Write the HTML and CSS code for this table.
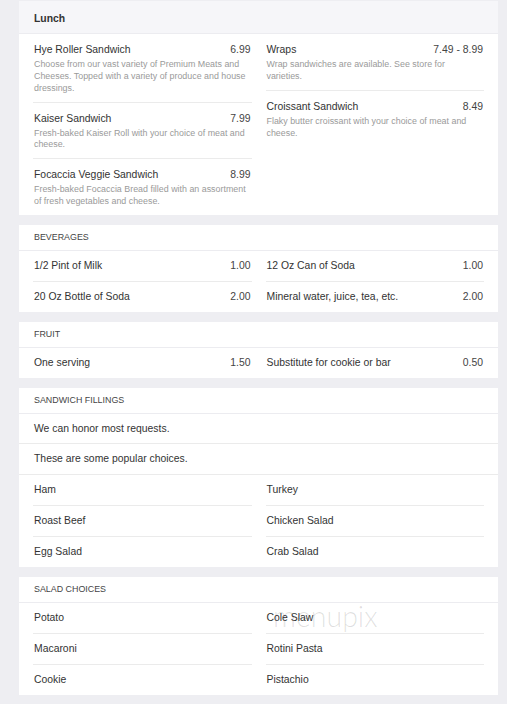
FILE: index.html
```html
<!DOCTYPE html>
<html lang="en">
<head>
<meta charset="utf-8">
<title>Menu</title>
<link rel="stylesheet" href="styles.css">
</head>
<body>
<div class="page">
  <section class="card">
    <h2 class="card-title">Lunch</h2>
    <div class="cols">
      <div class="col">
        <div class="item">
          <div class="item-head"><span class="name">Hye Roller Sandwich</span><span class="price">6.99</span></div>
          <p class="desc">Choose from our vast variety of Premium Meats and Cheeses. Topped with a variety of produce and house dressings.</p>
        </div>
        <div class="item">
          <div class="item-head"><span class="name">Kaiser Sandwich</span><span class="price">7.99</span></div>
          <p class="desc">Fresh-baked Kaiser Roll with your choice of meat and cheese.</p>
        </div>
        <div class="item">
          <div class="item-head"><span class="name">Focaccia Veggie Sandwich</span><span class="price">8.99</span></div>
          <p class="desc">Fresh-baked Focaccia Bread filled with an assortment of fresh vegetables and cheese.</p>
        </div>
      </div>
      <div class="col">
        <div class="item">
          <div class="item-head"><span class="name">Wraps</span><span class="price">7.49 - 8.99</span></div>
          <p class="desc">Wrap sandwiches are available. See store for varieties.</p>
        </div>
        <div class="item">
          <div class="item-head"><span class="name">Croissant Sandwich</span><span class="price">8.49</span></div>
          <p class="desc">Flaky butter croissant with your choice of meat and cheese.</p>
        </div>
      </div>
    </div>
  </section>

  <section class="card">
    <h3 class="section-title">Beverages</h3>
    <div class="cols">
      <div class="col">
        <div class="row"><span class="name">1/2 Pint of Milk</span><span class="price">1.00</span></div>
        <div class="row"><span class="name">20 Oz Bottle of Soda</span><span class="price">2.00</span></div>
      </div>
      <div class="col">
        <div class="row"><span class="name">12 Oz Can of Soda</span><span class="price">1.00</span></div>
        <div class="row"><span class="name">Mineral water, juice, tea, etc.</span><span class="price">2.00</span></div>
      </div>
    </div>
  </section>

  <section class="card">
    <h3 class="section-title">Fruit</h3>
    <div class="cols">
      <div class="col">
        <div class="row"><span class="name">One serving</span><span class="price">1.50</span></div>
      </div>
      <div class="col">
        <div class="row"><span class="name">Substitute for cookie or bar</span><span class="price">0.50</span></div>
      </div>
    </div>
  </section>

  <section class="card">
    <h3 class="section-title">Sandwich Fillings</h3>
    <div class="note note-first">We can honor most requests.</div>
    <div class="note">These are some popular choices.</div>
    <div class="cols">
      <div class="col">
        <div class="row"><span class="name">Ham</span></div>
        <div class="row"><span class="name">Roast Beef</span></div>
        <div class="row"><span class="name">Egg Salad</span></div>
      </div>
      <div class="col">
        <div class="row"><span class="name">Turkey</span></div>
        <div class="row"><span class="name">Chicken Salad</span></div>
        <div class="row"><span class="name">Crab Salad</span></div>
      </div>
    </div>
  </section>

  <section class="card">
    <h3 class="section-title">Salad Choices</h3>
    <div class="cols">
      <div class="col">
        <div class="row"><span class="name">Potato</span></div>
        <div class="row"><span class="name">Macaroni</span></div>
        <div class="row"><span class="name">Cookie</span></div>
      </div>
      <div class="col">
        <div class="row"><span class="name">Cole Slaw</span></div>
        <div class="row"><span class="name">Rotini Pasta</span></div>
        <div class="row"><span class="name">Pistachio</span></div>
      </div>
    </div>
  </section>

  <div class="watermark">menupix</div>
</div>
</body>
</html>
```

FILE: styles.css
```css
* {
  box-sizing: border-box;
}

html, body {
  margin: 0;
  padding: 0;
  background: #eeeef2;
}

body {
  font-family: "Liberation Sans", Arial, sans-serif;
  color: #333;
}

.page {
  position: relative;
  padding: 1px 9px 10px 19px;
  display: flex;
  flex-direction: column;
  gap: 10px;
}

.card {
  background: #fff;
}

.card-title {
  margin: 0;
  height: 33px;
  padding: 11px 15px 0 15px;
  font-size: 10.4px;
  line-height: 14px;
  font-weight: bold;
  color: #333;
  background: #f6f6f9;
  border-bottom: 1px solid #ececf0;
}

.section-title {
  margin: 0;
  height: 26px;
  padding: 0 15px;
  font-size: 8.9px;
  line-height: 25px;
  font-weight: normal;
  text-transform: uppercase;
  color: #444;
  border-bottom: 1px solid #ececf0;
}

.cols {
  display: grid;
  grid-template-columns: 1fr 1fr;
  column-gap: 14px;
  padding: 0 14px;
}

.col {
  display: flex;
  flex-direction: column;
}

.item {
  padding: 8px 1px 7px 1px;
}

.item + .item,
.row + .row {
  border-top: 1px solid #ebebeb;
}

.item-head,
.row {
  display: flex;
  justify-content: space-between;
  align-items: center;
  font-size: 10.4px;
}

.item-head {
  line-height: 14px;
  padding-top: 1px;
}

.name {
  color: #333;
}

.price {
  color: #444;
}

.desc {
  margin: 2px 0 0 0;
  padding-right: 2px;
  font-size: 8.9px;
  line-height: 11.84px;
  color: #9a9a9a;
}

.row {
  height: 31px;
  padding: 0 1px;
}

.col .row:first-child {
  height: 30px;
}

.note {
  height: 31px;
  padding: 0 15px;
  font-size: 10.4px;
  line-height: 30px;
  color: #333;
  border-bottom: 1px solid #ebebeb;
}

.note-first {
  height: 30px;
  line-height: 29px;
}

.watermark {
  position: absolute;
  left: 273px;
  top: 602px;
  font-family: Lato, "Liberation Sans", sans-serif;
  font-weight: 300;
  font-size: 28.5px;
  line-height: 1;
  color: rgba(0, 0, 0, 0.13);
  pointer-events: none;
}
```
